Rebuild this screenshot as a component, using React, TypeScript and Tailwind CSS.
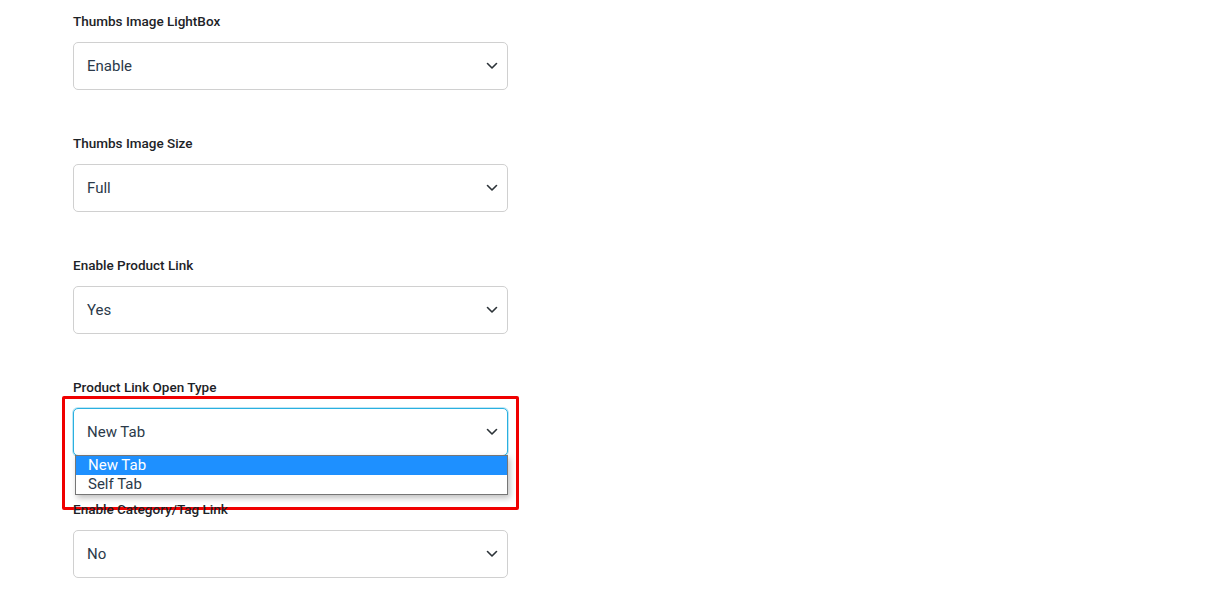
import React from 'react';

const fields = [
  { label: 'Thumbs Image LightBox', value: 'Enable' },
  { label: 'Thumbs Image Size', value: 'Full' },
  { label: 'Enable Product Link', value: 'Yes' },
  { label: 'Product Link Open Type', value: 'New Tab', open: true },
  { label: 'Enable Category/Tag Link', value: 'No' },
];

function Chevron() {
  return (
    <svg width="12" height="8" viewBox="0 0 12 8" className="shrink-0">
      <path d="M1.5 1.5 L6 6 L10.5 1.5" fill="none" stroke="#2c3338" strokeWidth="1.6" strokeLinecap="round" strokeLinejoin="round" />
    </svg>
  );
}

export default function App() {
  return (
    <div className="min-h-screen bg-white pl-[73px] pt-[13px]" style={{ fontFamily: 'Roboto, "Liberation Sans", sans-serif' }}>
      <div className="flex w-[435px] flex-col">
        {fields.map((f) => (
          <div key={f.label} className="relative h-[122px]">
            <div className="h-[16px] text-[13.5px] font-medium leading-[16px] text-[#1d2327]">{f.label}</div>
            <div
              className={`mt-[13px] flex h-[48px] items-center justify-between rounded-[5px] border bg-white pl-[13px] pr-[9px] text-[15px] text-[#2b3a4a] ${
                f.open ? 'border-[#2ab0e0] shadow-[0_0_0_1px_rgba(42,176,224,0.3)]' : 'border-[#d0d0d0]'
              }`}
            >
              <span>{f.value}</span>
              <Chevron />
            </div>
            {f.open && (
              <>
                <div className="pointer-events-none absolute left-[-11px] top-[17px] h-[114px] w-[457px] rounded-[2px] border-[3px] border-[#f00000]" />
                <div className="absolute left-[2px] top-[76px] z-10 w-[433px] border border-[#767676] bg-white text-[15px] leading-[19px] shadow-[2px_3px_6px_rgba(0,0,0,0.25)]">
                  <div className="bg-[#1e90ff] pl-[12px] text-white">New Tab</div>
                  <div className="pl-[12px] text-[#2b3a4a]">Self Tab</div>
                </div>
              </>
            )}
          </div>
        ))}
      </div>
    </div>
  );
}
